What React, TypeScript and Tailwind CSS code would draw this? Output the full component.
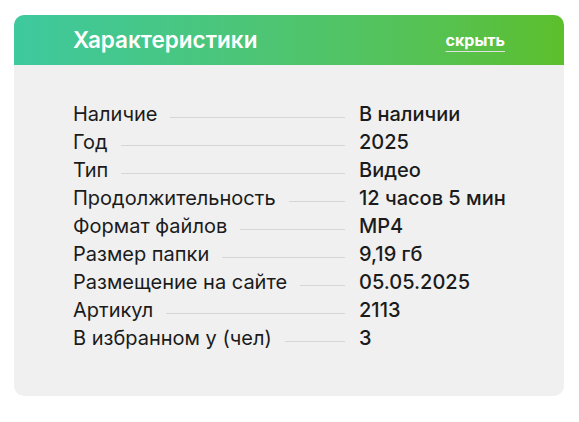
const rows: [string, string][] = [
  ["Наличие", "В наличии"],
  ["Год", "2025"],
  ["Тип", "Видео"],
  ["Продолжительность", "12 часов 5 мин"],
  ["Формат файлов", "MP4"],
  ["Размер папки", "9,19 гб"],
  ["Размещение на сайте", "05.05.2025"],
  ["Артикул", "2113"],
  ["В избранном у (чел)", "3"],
];

export default function App() {
  return (
    <div className="min-h-screen bg-white pt-[15px] pl-[14px] font-['Inter',sans-serif]">
      <div className="w-[550px] overflow-hidden rounded-[10px] bg-[#f0f0f0]">
        {/* header */}
        <div className="flex h-[50px] items-center justify-between bg-gradient-to-r from-[#3ec99e] to-[#5cbf2a] pl-[59px] pr-[59px]">
          <h2 className="text-[22.5px] font-semibold text-white">Характеристики</h2>
          <button className="text-[16px] font-bold text-white underline decoration-[#e0e0e0] decoration-1 underline-offset-[5px]">
            скрыть
          </button>
        </div>

        {/* rows */}
        <div className="pt-[35px] pb-[44px] pl-[59px]">
          {rows.map(([label, value]) => (
            <div key={label} className="flex h-[28px] items-center text-[20px] text-[#1b1b1b]">
              <div className="flex w-[272px] items-center">
                <span className="whitespace-nowrap">{label}</span>
                <span className="ml-[13px] mt-[6px] h-px flex-1 bg-[#d6d6d6]" />
              </div>
              <span className="ml-[14px] font-medium">{value}</span>
            </div>
          ))}
        </div>
      </div>
    </div>
  );
}
